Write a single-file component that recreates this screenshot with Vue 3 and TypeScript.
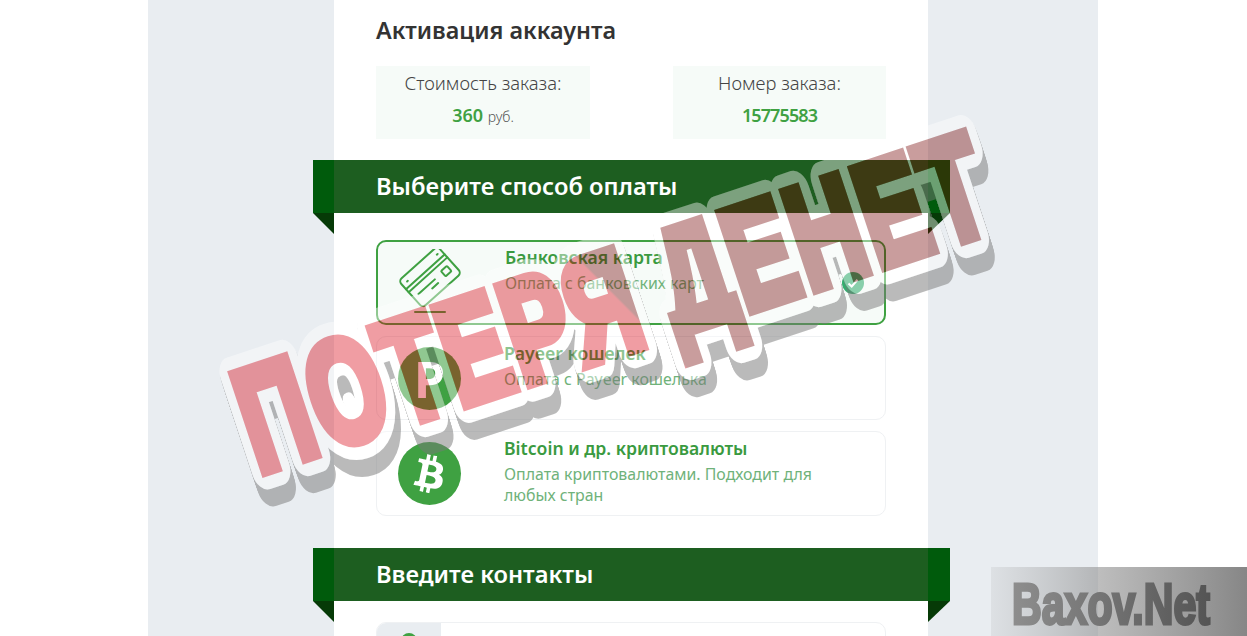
<script setup lang="ts">
interface PayMethod {
  id: string
  title: string
  desc: string
  selected?: boolean
}

const methods: PayMethod[] = [
  { id: 'card', title: 'Банковская карта', desc: 'Оплата с банковских карт', selected: true },
  { id: 'payeer', title: 'Payeer кошелек', desc: 'Оплата с Payeer кошелька' },
  { id: 'btc', title: 'Bitcoin и др. криптовалюты', desc: 'Оплата криптовалютами. Подходит для любых стран' },
]

const shadowSteps = [2, 4, 6, 8, 10, 12, 14, 16, 18]
</script>

<template>
  <div class="page">
    <main class="col">
      <h1 class="col__title">Активация аккаунта</h1>
      <div class="info">
        <div class="info__box">
          <span class="info__label">Стоимость заказа:</span>
          <span class="info__value"><b>360</b> <small>руб.</small></span>
        </div>
        <div class="info__box">
          <span class="info__label">Номер заказа:</span>
          <span class="info__value info__value--num"><b>15775583</b></span>
        </div>
      </div>

      <h2 class="ribbon">Выберите способ оплаты</h2>
      <div class="methods">
        <div
          v-for="m in methods"
          :key="m.id"
          class="method"
          :class="{ 'method--on': m.selected }"
        >
          <div class="method__icon">
            <svg v-if="m.id === 'card'" width="64" height="76" viewBox="0 0 64 76" fill="none" stroke="#3fa142" stroke-width="2" stroke-linecap="round">
              <g transform="translate(32 28) rotate(-42)">
                <rect x="-26" y="-18" width="52" height="36" rx="4" />
                <path d="M-26 -7H26M-26 -3H26" />
                <rect x="12" y="3" width="8" height="7" rx="1" />
                <path d="M-20 5H2M-6 10H2M-20 -12H-19M20 -12H21" />
              </g>
              <path d="M17 63H47" />
            </svg>
            <div v-else-if="m.id === 'payeer'" class="circle">P</div>
            <div v-else class="circle">
              <svg width="30" height="38" viewBox="0 0 384 512" class="circle__btc">
                <path fill="#fff" d="M310.204 242.638c27.73-14.18 45.377-39.39 41.28-81.3-5.358-57.351-52.458-76.573-114.85-81.929V0h-48.528v77.203c-12.605 0-25.525.315-38.444.63V0h-48.528v79.409c-17.842.539-38.622.276-97.37 0v51.678c38.314-.678 58.417-3.14 63.023 21.427v217.429c-2.925 19.492-18.524 16.685-53.255 16.071L3.765 443.68c88.481 0 97.37.315 97.37.315V512h48.528v-67.06c13.234.315 26.154.315 38.444.315V512h48.528v-68.005c81.299-4.412 135.647-24.894 142.895-101.467 5.671-61.446-23.32-88.862-69.326-99.89zM150.608 134.553c27.415 0 113.126-8.507 113.126 48.528 0 54.515-85.71 48.212-113.126 48.212v-96.74zm0 251.776V279.821c32.772 0 133.294-9.138 133.294 53.255 0 60.186-100.522 53.253-133.294 53.253z" />
              </svg>
            </div>
          </div>
          <div class="method__text">
            <div class="method__title">{{ m.title }}</div>
            <div class="method__desc">{{ m.desc }}</div>
          </div>
          <span v-if="m.selected" class="method__check">
            <svg width="12" height="12" viewBox="0 0 12 12" fill="none" stroke="#fff" stroke-width="2.2"><path d="M1.5 6.5L4.7 9.5L10.5 2.8" /></svg>
          </span>
        </div>
      </div>

      <h2 class="ribbon ribbon--second">Введите контакты</h2>
      <div class="contact">
        <div class="contact__icon"><span class="contact__dot" /></div>
      </div>
    </main>

    <svg class="overlay" width="1247" height="636" viewBox="0 0 1247 636">
      <defs>
        <text id="stamp-text" x="-2" y="-6" font-family="'Liberation Sans Narrow','Liberation Sans',sans-serif" font-weight="700" font-size="146" letter-spacing="6" word-spacing="-8" textLength="782" lengthAdjust="spacingAndGlyphs">ПОТЕРЯ ДЕНЕТ</text>
        <linearGradient id="stamp-fill" gradientUnits="userSpaceOnUse" x1="388" y1="-68.5" x2="390" y2="-69.5">
          <stop offset="0" stop-color="#d8000f" />
          <stop offset="1" stop-color="#720000" />
        </linearGradient>
        <mask id="no-fill" maskUnits="userSpaceOnUse" x="-100" y="-300" width="1000" height="600">
          <rect x="-100" y="-300" width="1000" height="600" fill="#fff" />
          <use href="#stamp-text" fill="#000" stroke="#000" stroke-width="12" />
        </mask>
        <mask id="no-outline" maskUnits="userSpaceOnUse" x="-100" y="-300" width="1000" height="600">
          <rect x="-100" y="-300" width="1000" height="600" fill="#fff" />
          <use href="#stamp-text" fill="#000" stroke="#000" stroke-width="38" stroke-linejoin="round" />
        </mask>
        <linearGradient id="mark-bg" x1="0" y1="0" x2="1" y2="0">
          <stop offset="0" stop-color="#999" stop-opacity=".15" />
          <stop offset=".42" stop-color="#888" stop-opacity=".55" />
          <stop offset="1" stop-color="#808080" stop-opacity=".95" />
        </linearGradient>
        <linearGradient id="mark-text" gradientUnits="userSpaceOnUse" x1="0" y1="0" x2="198" y2="0">
          <stop offset="0" stop-color="#8e8e8e" />
          <stop offset="1" stop-color="#545454" />
        </linearGradient>
      </defs>

      <rect x="991" y="567" width="256" height="69" fill="url(#mark-bg)" />
      <text transform="translate(1012 624) scale(1 1.25)" fill="url(#mark-text)" stroke="url(#mark-text)" stroke-width="2.5" font-family="'Liberation Sans Narrow','Liberation Sans',sans-serif" font-weight="700" font-size="46" textLength="198" lengthAdjust="spacingAndGlyphs">Baxov.Net</text>

      <g transform="translate(262 478) rotate(-18.3)">
        <g opacity=".5" mask="url(#no-outline)">
          <use
            v-for="k in shadowSteps"
            :key="k"
            href="#stamp-text"
            :y="k"
            fill="#787878"
            stroke="#787878"
            stroke-width="38"
            stroke-linejoin="round"
          />
        </g>
        <g opacity=".42" mask="url(#no-fill)">
          <use href="#stamp-text" fill="#fff" stroke="#fff" stroke-width="38" stroke-linejoin="round" />
        </g>
        <g opacity=".38">
          <use href="#stamp-text" fill="url(#stamp-fill)" stroke="url(#stamp-fill)" stroke-width="12" />
        </g>
      </g>
    </svg>
  </div>
</template>

<style>
html,
body {
  margin: 0;
  overflow: hidden;
  background: #fff;
}
</style>

<style scoped>
.page {
  position: relative;
  width: 1247px;
  height: 636px;
  overflow: hidden;
  font-family: "Noto Sans", "Open Sans", sans-serif;
}

.col {
  box-sizing: border-box;
  width: 594px;
  height: 636px;
  margin-left: 334px;
  padding: 13px 42px 0;
  background: #fff;
  box-shadow: -186px 0 0 #e9edf1, 170px 0 0 #e9edf1;
}

.col__title {
  margin: 0;
  font-size: 23.4px;
  line-height: 34px;
  font-weight: 600;
  color: #333;
}

.info {
  display: flex;
  justify-content: space-between;
  margin-top: 19px;
}

.info__box {
  width: 214px;
  height: 73px;
  background: #f6fbf8;
  display: flex;
  flex-direction: column;
  align-items: center;
  gap: 9px;
  padding-top: 6px;
  box-sizing: border-box;
}

.info__box:last-child {
  width: 213px;
}

.info__label {
  font-size: 18.4px;
  line-height: 22px;
  font-weight: 300;
  color: #444;
}

.info__value {
  font-size: 18px;
  line-height: 24px;
  color: #3fa142;
}

.info__value b {
  font-weight: 600;
}

.info__value--num b {
  letter-spacing: -0.9px;
}

.info__value small {
  font-size: 14px;
  font-weight: 300;
  color: #555;
}

.ribbon {
  position: relative;
  height: 53px;
  margin: 21px -64px 0 -63px;
  padding-left: 63px;
  font-size: 23.7px;
  line-height: 53px;
  font-weight: 600;
  color: #fff;
  background: linear-gradient(to right, #005b0c 21px, #1d5e20 21px, #1d5e20 calc(100% - 22px), #005b0c calc(100% - 22px));
}

.ribbon::before,
.ribbon::after {
  content: "";
  position: absolute;
  top: 100%;
  width: 21px;
  height: 21px;
  background: #063a07;
}

.ribbon::before {
  left: 0;
  clip-path: polygon(0 0, 100% 0, 100% 100%);
}

.ribbon::after {
  right: 0;
  width: 22px;
  clip-path: polygon(0 0, 100% 0, 0 100%);
}

.ribbon--second {
  margin-top: 32px;
}

.methods {
  display: flex;
  flex-direction: column;
  gap: 11px;
  margin-top: 27px;
}

.method {
  position: relative;
  box-sizing: border-box;
  height: 84px;
  display: flex;
  border: 1px solid #eff1f3;
  border-radius: 10px;
  padding: 4px 40px 0 21px;
}

.method:last-child {
  height: 85px;
}

.method--on {
  height: 85px;
  border: 2px solid #3fa142;
  background: #f6fbf8;
  padding: 3px 40px 0 20px;
}

.method__icon {
  flex: 0 0 63px;
  margin-right: 43px;
  display: flex;
  justify-content: center;
}

.method--on .method__icon svg {
  margin-top: 4px;
}

.circle {
  width: 63px;
  height: 63px;
  margin-top: 6px;
  border-radius: 50%;
  background: #3fa142;
  display: flex;
  align-items: center;
  justify-content: center;
  font-size: 50px;
  font-weight: 700;
  color: #fff;
}

.circle__btc {
  transform: rotate(12deg);
}

.method__title {
  font-size: 17.6px;
  line-height: 24px;
  font-weight: 600;
  color: #3a9a40;
}

.method__desc {
  margin-top: 4px;
  font-size: 15.9px;
  line-height: 21px;
  color: #6fb27a;
}

.method__check {
  position: absolute;
  top: 30px;
  right: 20px;
  width: 22px;
  height: 22px;
  border-radius: 50%;
  background: #33ad6e;
  display: flex;
  align-items: center;
  justify-content: center;
}

.contact {
  height: 60px;
  margin-top: 21px;
  border: 1px solid #eff1f3;
  border-radius: 10px 10px 0 0;
  overflow: hidden;
}

.contact__icon {
  width: 64px;
  height: 100%;
  background: #e9edf1;
  display: flex;
  justify-content: center;
}

.contact__dot {
  width: 16px;
  height: 16px;
  margin-top: 10px;
  border-radius: 50%;
  background: #3fa142;
}

.overlay {
  position: absolute;
  top: 0;
  left: 0;
  pointer-events: none;
}
</style>
